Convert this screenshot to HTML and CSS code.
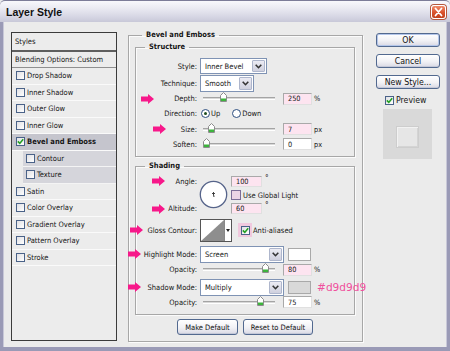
FILE: index.html
```html
<!DOCTYPE html>
<html>
<head>
<meta charset="utf-8">
<title>Layer Style</title>
<link rel="stylesheet" href="styles.css">
</head>
<body>
<div class="win">
  <div class="titlebar">
    <span class="title">Layer Style</span>
    <span class="close"><svg width="15" height="14" viewBox="0 0 15 14"><path d="M4.5 3.5 L10.5 10.5 M10.5 3.5 L4.5 10.5" stroke="#fff" stroke-width="1.8" stroke-linecap="round"/></svg></span>
  </div>
  <div class="frame">
    <div class="list">
      <div class="li head">Styles</div>
      <div class="li blend">Blending Options: Custom</div>
      <div class="li item"><span class="cb"></span>Drop Shadow</div>
      <div class="li item"><span class="cb"></span>Inner Shadow</div>
      <div class="li item"><span class="cb"></span>Outer Glow</div>
      <div class="li item"><span class="cb"></span>Inner Glow</div>
      <div class="li item sel"><span class="cb"><svg width="7" height="7" viewBox="0 0 7 7"><path d="M0.8 3.4 L2.8 5.4 L6.2 1.2" stroke="#22a022" stroke-width="1.6" fill="none"/></svg></span>Bevel and Emboss</div>
      <div class="li sub"><div class="subin"><span class="cb"></span>Contour</div></div>
      <div class="li sub"><div class="subin"><span class="cb"></span>Texture</div></div>
      <div class="li item"><span class="cb"></span>Satin</div>
      <div class="li item"><span class="cb"></span>Color Overlay</div>
      <div class="li item"><span class="cb"></span>Gradient Overlay</div>
      <div class="li item"><span class="cb"></span>Pattern Overlay</div>
      <div class="li item"><span class="cb"></span>Stroke</div>
    </div>

    <fieldset class="grp main">
      <legend class="lg-main">Bevel and Emboss</legend>

      <fieldset class="grp structure">
        <legend>Structure</legend>
        <div class="row h-style">
          <span class="lbl">Style:</span>
          <span class="select w-style"><span class="val">Inner Bevel</span><span class="dd"><svg width="7" height="5" viewBox="0 0 7 5"><path d="M0.7 0.7 L3.5 3.7 L6.3 0.7" stroke="#333" stroke-width="1.6" fill="none"/></svg></span></span>
        </div>
        <div class="row h-tech">
          <span class="lbl">Technique:</span>
          <span class="select w-tech"><span class="val">Smooth</span><span class="dd"><svg width="7" height="5" viewBox="0 0 7 5"><path d="M0.7 0.7 L3.5 3.7 L6.3 0.7" stroke="#333" stroke-width="1.6" fill="none"/></svg></span></span>
        </div>
        <div class="row h-depth">
          <span class="arrow a-depth"><svg width="13" height="10" viewBox="0 0 13 10"><polygon points="0,2.5 7,2.5 7,0 13,5 7,10 7,7.5 0,7.5" fill="#f7188a"/></svg></span>
          <span class="lbl">Depth:</span>
          <span class="slider"><span class="thumb" style="left:17px"><svg width="7" height="10" viewBox="0 0 7 10"><path d="M0.5 9.5 V3.5 L3.5 0.5 L6.5 3.5 V9.5 Z" fill="#fff" stroke="#8c8c8c"/><rect x="1" y="6.5" width="5" height="2.5" fill="#3db43d"/></svg></span></span>
          <span class="inp pink">250</span><span class="unit">%</span>
        </div>
        <div class="row h-dir">
          <span class="lbl">Direction:</span>
          <span class="radio on first"></span><span>Up</span>
          <span class="radio second"></span><span>Down</span>
        </div>
        <div class="row h-size">
          <span class="arrow a-size"><svg width="13" height="10" viewBox="0 0 13 10"><polygon points="0,2.5 7,2.5 7,0 13,5 7,10 7,7.5 0,7.5" fill="#f7188a"/></svg></span>
          <span class="lbl">Size:</span>
          <span class="slider"><span class="thumb" style="left:5px"><svg width="7" height="10" viewBox="0 0 7 10"><path d="M0.5 9.5 V3.5 L3.5 0.5 L6.5 3.5 V9.5 Z" fill="#fff" stroke="#8c8c8c"/><rect x="1" y="6.5" width="5" height="2.5" fill="#3db43d"/></svg></span></span>
          <span class="inp pink">7</span><span class="unit">px</span>
        </div>
        <div class="row h-soft">
          <span class="lbl">Soften:</span>
          <span class="slider"><span class="thumb" style="left:0px"><svg width="7" height="10" viewBox="0 0 7 10"><path d="M0.5 9.5 V3.5 L3.5 0.5 L6.5 3.5 V9.5 Z" fill="#fff" stroke="#8c8c8c"/><rect x="1" y="6.5" width="5" height="2.5" fill="#3db43d"/></svg></span></span>
          <span class="inp">0</span><span class="unit">px</span>
        </div>
      </fieldset>

      <fieldset class="grp shading">
        <legend>Shading</legend>
        <div class="angle-grid">
          <span class="lbl g-angle">
            <span class="arrow a-angle"><svg width="13" height="10" viewBox="0 0 13 10"><polygon points="0,2.5 7,2.5 7,0 13,5 7,10 7,7.5 0,7.5" fill="#f7188a"/></svg></span>Angle:</span>
          <span class="dial"><svg width="29" height="29" viewBox="0 0 29 29"><circle cx="14.5" cy="14.5" r="13.2" fill="#fff" stroke="#56648a" stroke-width="1.3"/><path d="M14.5 12 V15 M13 13.5 H16" stroke="#333" stroke-width="0.9"/><path d="M14.5 14.5 L15 17" stroke="#333" stroke-width="1"/></svg></span>
          <span class="g-ain"><span class="inp pink w-ang">100</span><span class="deg">°</span></span>
          <span class="g-gl"><span class="cb gl"></span><span>Use Global Light</span></span>
          <span class="lbl g-alt">
            <span class="arrow a-alt"><svg width="13" height="10" viewBox="0 0 13 10"><polygon points="0,2.5 7,2.5 7,0 13,5 7,10 7,7.5 0,7.5" fill="#f7188a"/></svg></span>Altitude:</span>
          <span class="g-altin"><span class="inp pink w-ang">60</span><span class="deg">°</span></span>
        </div>
        <div class="row h-gloss">
          <span class="arrow a-gloss"><svg width="13" height="10" viewBox="0 0 13 10"><polygon points="0,2.5 7,2.5 7,0 13,5 7,10 7,7.5 0,7.5" fill="#f7188a"/></svg></span>
          <span class="lbl">Gloss Contour:</span>
          <span class="contour"><svg width="32" height="23" viewBox="0 0 32 23"><rect x="0.5" y="0.5" width="31" height="22" fill="#fff" stroke="#555"/><polygon points="1,22 24,1 24,22" fill="#8e8e8e"/><line x1="24.5" y1="1" x2="24.5" y2="22" stroke="#888"/><polygon points="26,10 30,10 28,13" fill="#222"/></svg></span>
          <span class="aa"><span class="cb"><svg width="7" height="7" viewBox="0 0 7 7"><path d="M0.8 3.4 L2.8 5.4 L6.2 1.2" stroke="#22a022" stroke-width="1.6" fill="none"/></svg></span></span>
          <span class="aatext">Anti-aliased</span>
        </div>
        <div class="row h-mode m-hi">
          <span class="arrow a-mode"><svg width="13" height="10" viewBox="0 0 13 10"><polygon points="0,2.5 7,2.5 7,0 13,5 7,10 7,7.5 0,7.5" fill="#f7188a"/></svg></span>
          <span class="lbl">Highlight Mode:</span>
          <span class="select w-mode"><span class="val">Screen</span><span class="dd"><svg width="7" height="5" viewBox="0 0 7 5"><path d="M0.7 0.7 L3.5 3.7 L6.3 0.7" stroke="#333" stroke-width="1.6" fill="none"/></svg></span></span>
          <span class="swatch white"></span>
        </div>
        <div class="row h-op1">
          <span class="lbl">Opacity:</span>
          <span class="slider"><span class="thumb" style="left:59px"><svg width="7" height="10" viewBox="0 0 7 10"><path d="M0.5 9.5 V3.5 L3.5 0.5 L6.5 3.5 V9.5 Z" fill="#fff" stroke="#8c8c8c"/><rect x="1" y="6.5" width="5" height="2.5" fill="#3db43d"/></svg></span></span>
          <span class="inp pink">80</span><span class="unit">%</span>
        </div>
        <div class="row h-mode m-sh">
          <span class="arrow a-mode"><svg width="13" height="10" viewBox="0 0 13 10"><polygon points="0,2.5 7,2.5 7,0 13,5 7,10 7,7.5 0,7.5" fill="#f7188a"/></svg></span>
          <span class="lbl">Shadow Mode:</span>
          <span class="select w-mode"><span class="val">Multiply</span><span class="dd"><svg width="7" height="5" viewBox="0 0 7 5"><path d="M0.7 0.7 L3.5 3.7 L6.3 0.7" stroke="#333" stroke-width="1.6" fill="none"/></svg></span></span>
          <span class="swatch grey"></span>
          <span class="note">#d9d9d9</span>
        </div>
        <div class="row h-op2">
          <span class="lbl">Opacity:</span>
          <span class="slider"><span class="thumb" style="left:54px"><svg width="7" height="10" viewBox="0 0 7 10"><path d="M0.5 9.5 V3.5 L3.5 0.5 L6.5 3.5 V9.5 Z" fill="#fff" stroke="#8c8c8c"/><rect x="1" y="6.5" width="5" height="2.5" fill="#3db43d"/></svg></span></span>
          <span class="inp">75</span><span class="unit">%</span>
        </div>
      </fieldset>

      <div class="bottom-btns">
        <span class="btn b-make">Make Default</span>
        <span class="btn b-reset">Reset to Default</span>
      </div>
    </fieldset>

    <div class="side">
      <span class="btn sbtn ok">OK</span>
      <span class="btn sbtn">Cancel</span>
      <span class="btn sbtn">New Style...</span>
      <div class="prev-row"><span class="cb"><svg width="7" height="7" viewBox="0 0 7 7"><path d="M0.8 3.4 L2.8 5.4 L6.2 1.2" stroke="#22a022" stroke-width="1.6" fill="none"/></svg></span><span>Preview</span></div>
      <div class="preview"><div class="prev-inner"></div></div>
    </div>
  </div>
</div>
</body>
</html>
```

FILE: styles.css
```css
* { box-sizing: border-box; }
html, body { margin: 0; padding: 0; }
body {
  font-family: "DejaVu Sans Condensed", "DejaVu Sans", sans-serif;
  font-stretch: condensed;
  font-size: 7.5px;
  color: #161616;
  background: #ebebeb;
}
.win {
  width: 450px;
  height: 351px;
  display: flex;
  flex-direction: column;
  overflow: hidden;
}
.titlebar {
  height: 22px;
  flex: none;
  display: flex;
  align-items: center;
  justify-content: space-between;
  padding: 1px 4px 0 6px;
  background: linear-gradient(#f8f8fc 0%, #eaeaf2 35%, #d6d6e4 75%, #c8c8d8 100%);
  border-top: 1px solid #7c7c98;
  border-radius: 5px 5px 0 0;
}
.title {
  font-family: "Liberation Sans", Arial, sans-serif;
  font-stretch: normal;
  font-weight: bold;
  font-size: 10.5px;
  color: #111;
}
.close {
  width: 15px;
  height: 14px;
  border-radius: 3px;
  border: 1px solid #fff;
  background: linear-gradient(#f08b6a, #d9532d 55%, #c2401c);
  display: flex;
  align-items: center;
  justify-content: center;
  box-shadow: 0 0 0 1px #b5583c;
}
.close svg { display: block; margin: -1px; }
.frame {
  flex: 1;
  display: flex;
  align-items: flex-start;
  padding: 10px 0 0 8px;
  background: #ebebeb;
  border-style: solid;
  border-color: #9a9ab6;
  border-width: 0 3px 4px 3px;
  box-shadow: inset 1px 0 0 #c8c8d8, inset -1px 0 0 #c8c8d8;
}

/* ---------- style list ---------- */
.list {
  width: 106px;
  height: 309px;
  flex: none;
  border: 1px solid #3b3b3b;
  background: #ececec;
}
.li {
  display: flex;
  align-items: center;
  white-space: nowrap;
}
.head {
  height: 19px;
  padding-left: 3px;
  border-bottom: 2px solid #5e5e5e;
}
.blend {
  height: 16px;
  padding-left: 3px;
  border-bottom: 1px solid #8f8f8f;
}
.item {
  height: 16.5px;
  padding-left: 4px;
  border-bottom: 1px solid #fafafa;
}
.item .cb { margin-right: 2px; }
.sel {
  background: #c5c5cd;
  font-weight: bold;
}
.sub {
  height: 16.5px;
  padding-left: 11px;
  align-items: stretch;
}
.subin {
  flex: 1;
  display: flex;
  align-items: center;
  padding-left: 3px;
  background: #d5d5db;
  border-bottom: 1px solid #f4f4f4;
}
.subin .cb { margin-right: 2px; }

.cb {
  width: 9px;
  height: 9px;
  flex: none;
  border: 1px solid #4a6288;
  background: linear-gradient(135deg, #e0e0e4, #ffffff);
  display: inline-flex;
  align-items: center;
  justify-content: center;
}
.cb svg { display: block; }

/* ---------- group boxes ---------- */
fieldset.grp {
  margin: 0;
  padding: 0;
  min-inline-size: 0;
  border: 1px solid #a7a7a7;
  box-shadow: 1px 1px 0 #fbfbfb, inset 1px 1px 0 #fbfbfb;
}
fieldset.grp > legend {
  font-weight: bold;
  line-height: 10px;
  padding: 0 4px;
  margin-left: 9px;
}
.main {
  width: 235px;
  flex: none;
  margin-left: 11px !important;
  margin-top: -2px !important;
  padding: 2px 7px 6px 6px !important;
}
.main > legend.lg-main { margin-left: 7px; }
.structure {
  padding: 5px 0 4px 0 !important;
}
.shading {
  margin-top: 4px !important;
  padding: 3px 0 6px 0 !important;
}

/* ---------- rows ---------- */
.row {
  display: flex;
  align-items: center;
  position: relative;
  white-space: nowrap;
}
.lbl {
  width: 61px;
  flex: none;
  text-align: right;
  margin-right: 3px;
  position: relative;
}
.h-style { height: 18px; }
.h-tech { height: 17px; }
.h-depth { height: 13px; }
.h-dir { height: 17px; }
.h-size { height: 14px; }
.h-soft { height: 16px; }

.arrow {
  position: absolute;
  top: 50%;
  margin-top: -5px;
  line-height: 0;
}
.arrow svg { display: block; }
.a-depth { left: 5px; }
.a-size { left: 17px; }
.a-gloss { left: -6px; }
.a-mode { left: -8px; }
.lbl .arrow { left: 16px; }

.select {
  display: flex;
  align-items: stretch;
  border: 1px solid #7f93b4;
  background: #fff;
  flex: none;
}
.select .val {
  flex: 1;
  display: flex;
  align-items: center;
  padding-left: 4px;
}
.select .dd {
  width: 13px;
  flex: none;
  display: flex;
  align-items: center;
  justify-content: center;
  margin: 1px;
  border: 1px solid #aeb6cc;
  border-radius: 1px;
  background: linear-gradient(#ececf4, #cfd0de);
}
.w-style { width: 67px; height: 16px; }
.w-tech { width: 54px; height: 17px; }
.w-mode { width: 84px; height: 17px; }

.slider {
  position: relative;
  width: 72px;
  height: 3px;
  flex: none;
  margin: 0 8px 0 3px;
  border-top: 1px solid #a4a4a4;
  border-bottom: 1px solid #ffffff;
  background: #d8d8d8;
}
.thumb {
  position: absolute;
  top: -6px;
  line-height: 0;
}
.thumb svg { display: block; }

.inp {
  width: 29px;
  height: 12px;
  flex: none;
  border: 1px solid #a9a9a9;
  border-right-color: #e0e0e0;
  border-bottom-color: #e0e0e0;
  background: #fff;
  padding-left: 4px;
  display: flex;
  align-items: center;
  font-size: 7.3px;
}
.inp.pink { background: #fde4f0; }
.unit { margin-left: 2px; font-size: 7.3px; }
.w-ang { width: 31px; height: 11px; }
.deg { margin-left: 3px; align-self: flex-start; font-size: 8px; line-height: 6px; }

.radio {
  width: 9px;
  height: 9px;
  flex: none;
  border-radius: 50%;
  border: 1px solid #2d4e80;
  background: #fff;
  margin-right: 1px;
  display: inline-flex;
  align-items: center;
  justify-content: center;
}
.radio.on::after {
  content: "";
  width: 3px;
  height: 3px;
  border-radius: 50%;
  background: #1f4d1f;
}
.radio.first { margin-left: 1px; }
.radio.second { margin-left: 12px; }

/* ---------- shading ---------- */
.angle-grid {
  display: grid;
  grid-template-columns: 61px 34px auto;
  grid-template-rows: 14px 14px 13px;
  align-items: center;
  white-space: nowrap;
}
.angle-grid .lbl { width: auto; margin-right: 0; }
.g-angle { grid-column: 1; grid-row: 1; }
.g-alt { grid-column: 1; grid-row: 3; }
.dial { grid-column: 2; grid-row: 1 / 4; margin-left: 2px; line-height: 0; }
.dial svg { display: block; }
.g-ain, .g-altin, .g-gl { grid-column: 3; display: flex; align-items: center; }
.g-ain { grid-row: 1; }
.g-gl { grid-row: 2; }
.g-altin { grid-row: 3; }
.cb.gl {
  width: 10px;
  height: 10px;
  background: #ead3e6;
  border-color: #7a6c98;
  margin-right: 2px;
}
.h-gloss { height: 24px; margin-top: 3px; }
.contour { margin-left: 0; line-height: 0; flex: none; }
.contour svg { display: block; }
.aa {
  width: 14px;
  height: 14px;
  margin-left: 6px;
  background: #f1c9de;
  display: flex;
  align-items: center;
  justify-content: center;
  flex: none;
}
.aatext { margin-left: 1px; }
.h-mode { height: 18px; }
.m-hi { margin-top: 3px; }
.m-sh { margin-top: 2px; }
.h-op1 { height: 13px; }
.h-op2 { height: 12px; }
.swatch {
  width: 23px;
  height: 13px;
  margin-left: 4px;
  border: 1px solid #a9a9a9;
  flex: none;
}
.swatch.white { background: #fff; }
.swatch.grey { background: #d9d9d9; }
.note {
  margin-left: 6px;
  font-family: "DejaVu Sans", sans-serif;
  font-stretch: normal;
  font-size: 10.6px;
  color: #f0509c;
}

/* ---------- buttons ---------- */
.btn {
  display: flex;
  align-items: center;
  justify-content: center;
  border: 1px solid #52698f;
  border-radius: 3px;
  background: linear-gradient(#ffffff, #f1f1f5 55%, #d9d9e4);
  box-shadow: inset 0 -1px 0 #c4c8d8;
  white-space: nowrap;
  color: #111;
}
.bottom-btns {
  display: flex;
  justify-content: center;
  gap: 5px;
  margin-top: 4px;
}
.b-make { width: 61px; height: 16px; }
.b-reset { width: 70px; height: 16px; }

.side {
  width: 64px;
  flex: none;
  margin-left: 13px;
  padding-top: 1px;
  display: flex;
  flex-direction: column;
}
.sbtn {
  height: 14px;
  font-size: 8.7px;
  margin-bottom: 7px;
}
.sbtn.ok { box-shadow: inset 0 0 0 1px #b4c6ea; }
.prev-row {
  display: flex;
  align-items: center;
  height: 10px;
  margin-top: -1px;
  margin-left: 9px;
  font-size: 8.7px;
}
.prev-row .cb { margin-right: 2px; }
.preview {
  width: 49px;
  height: 50px;
  margin-top: 4px;
  margin-left: 7px;
  background: #d9d9d9;
  display: flex;
  align-items: center;
  justify-content: center;
  padding-top: 5px;
}
.prev-inner {
  width: 23px;
  height: 22px;
  background: #e6e6e6;
  border: 1px solid #cdcdcd;
  box-shadow: inset 1px 1px 0 #f2f2f2, inset -1px -1px 0 #d4d4d4;
}
```
